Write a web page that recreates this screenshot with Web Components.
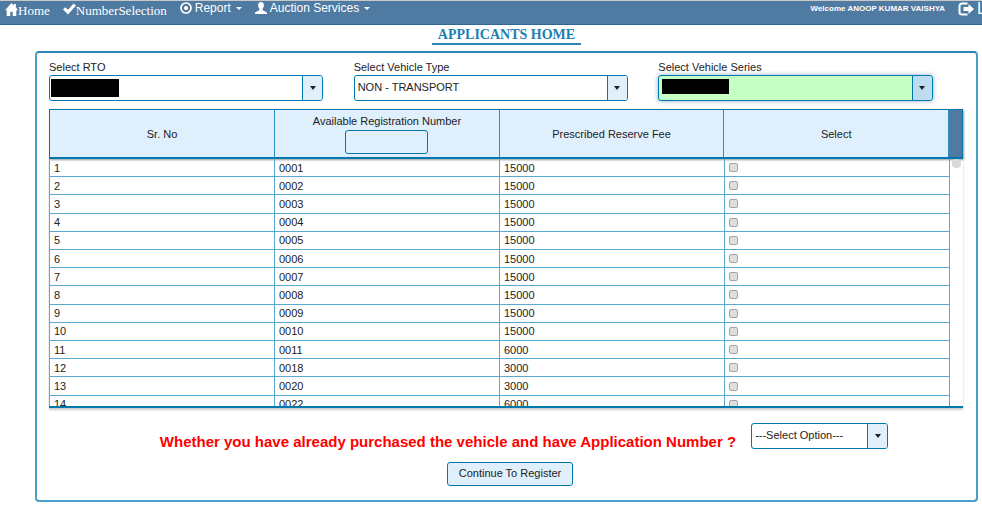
<!DOCTYPE html>
<html lang="en">
<head>
<meta charset="utf-8">
<title>Applicants Home</title>
<style>
    html {
        overflow: hidden;
    }
    body {
        margin: 0;
        background: #fff;
        color: #222;
        font-family: "Liberation Sans", Arial, sans-serif;
        font-size: 11px;
        --line: #0078ae;
        --line-soft: #5aa9d0;
        --fill: #dfeffc;
        --bar: #4f7aa1;
    }
    main {
        padding: 2px 4px 6px 35px;
    }
</style>
</head>
<body>
<nav-bar>
    <nav-link icon="home" serif>Home</nav-link>
    <nav-link icon="ok" serif>NumberSelection</nav-link>
    <nav-link icon="record" menu>Report</nav-link>
    <nav-link icon="user" menu>Auction Services</nav-link>
    <span slot="user">Welcome ANOOP KUMAR VAISHYA</span>
    <nav-link slot="end" icon="logout" large>Logout</nav-link>
</nav-bar>
<main>
    <page-title>APPLICANTS HOME</page-title>
    <content-panel>
        <field-row>
            <select-field label="Select RTO" mask="wide"></select-field>
            <select-field label="Select Vehicle Type" value="NON - TRANSPORT"></select-field>
            <select-field label="Select Vehicle Series" mask="narrow" active></select-field>
        </field-row>
        <number-table></number-table>
        <question-row>
            Whether you have already purchased the vehicle and have Application Number ?
            <select-field slot="answer" value="---Select Option---" name="Application Number"></select-field>
        </question-row>
        <action-button>Continue To Register</action-button>
    </content-panel>
</main>

<script>
const ICONS = {
    home: '<svg width="13" height="13" viewBox="0 0 13 13"><path fill="#fff" d="M6.500 0 8.900 2.300V1h2v3.200L13 7.300h-1.700V13H7.700V8.800H5.300V13H1.700V7.300H0z"/></svg>',
    ok: '<svg width="13" height="12" viewBox="0 0 13 12"><path fill="#fff" d="M0 6.600 2.200 4.200 5 6.800 10.600.4 13 2.600 5 11.600z"/></svg>',
    record: '<svg width="12" height="12" viewBox="0 0 12 12"><circle cx="6" cy="6" r="5" fill="none" stroke="#fff" stroke-width="1.700"/><circle cx="6" cy="6" r="2.100" fill="#fff"/></svg>',
    user: '<svg width="12" height="12" viewBox="0 0 12 12"><path fill="#fff" d="M6 0c2 0 2.900 1.400 2.900 3.300 0 1.500-.6 2.600-1.300 3.400v1.100c0 .5.4.8 1 1l2.200.9c.8.3 1.200.8 1.200 1.600v.7H0v-.7c0-.8.4-1.300 1.200-1.600l2.200-.9c.6-.2 1-.5 1-1V6.700C3.700 5.900 3.100 4.800 3.100 3.300 3.100 1.400 4 0 6 0z"/></svg>',
    logout: '<svg width="16" height="14" viewBox="0 0 16 14"><path fill="none" stroke="#fff" stroke-width="2" d="M9.500 1.500H4A2.500 2.500 0 0 0 1.500 4v6A2.500 2.500 0 0 0 4 12.500h5.500"/><path fill="#fff" d="M5.500 5h5V2L16 7l-5.500 5V9h-5z"/></svg>'
};

class NavBar extends HTMLElement {
    constructor() {
        super();
        this.attachShadow({ mode: 'open' });
        this.shadowRoot.innerHTML = `
        <style>
            :host {
                display: block;
                overflow: hidden;
                background: var(--bar);
                border-top: 1px solid #c9c9c9;
                border-bottom: 1px solid #2f6796;
                color: #fff;
            }
            nav {
                display: flex;
                align-items: flex-start;
                gap: 13px;
                height: 23px;
                padding-left: 5px;
                margin-right: -44px;
                white-space: nowrap;
            }
            .user {
                margin-left: auto;
                font-size: 8px;
                font-weight: bold;
                line-height: 16px;
            }
        </style>
        <nav>
            <slot></slot>
            <div class="user"><slot name="user"></slot></div>
            <slot name="end"></slot>
        </nav>
        `;
    }
}

class NavLink extends HTMLElement {
    constructor() {
        super();
        this.attachShadow({ mode: 'open' });
        this.shadowRoot.innerHTML = `
        <style>
            :host {
                display: block;
            }
            a {
                display: flex;
                align-items: center;
                gap: 3px;
                color: inherit;
                text-decoration: none;
                font-size: 12px;
                line-height: 14px;
            }
            :host([serif]) a {
                gap: 0;
                font-family: "Liberation Serif", "Times New Roman", serif;
                font-size: 13px;
                line-height: 20px;
            }
            :host([serif]) svg {
                margin-bottom: 4px;
            }
            :host([large]) a {
                font-size: 16px;
                line-height: 16px;
            }
            svg {
                display: block;
            }
            .caret {
                margin-left: 2px;
                border: 3px solid transparent;
                border-top-color: #fff;
                border-bottom: 0;
            }
        </style>
        <a href="#">
            ${ICONS[this.getAttribute('icon')]}
            <span><slot></slot></span>
            ${this.hasAttribute('menu') ? '<i class="caret"></i>' : ''}
        </a>
        `;
    }
}

class PageTitle extends HTMLElement {
    constructor() {
        super();
        this.attachShadow({ mode: 'open' });
        this.shadowRoot.innerHTML = `
        <style>
            :host {
                display: flex;
                justify-content: center;
                margin-bottom: 6px;
            }
            h1 {
                margin: 0;
                padding: 0 6px;
                border-bottom: 2px solid #2a86b8;
                color: #1c7fb2;
                font: bold 14px/16px "Liberation Serif", "Times New Roman", serif;
            }
        </style>
        <h1><slot></slot></h1>
        `;
    }
}

class ContentPanel extends HTMLElement {
    constructor() {
        super();
        this.attachShadow({ mode: 'open' });
        this.shadowRoot.innerHTML = `
        <style>
            :host {
                display: block;
                padding: 7px 13px 14px 12px;
                border: 2px solid #4a9fcb;
                border-top-color: #2a86b8;
                border-radius: 4px;
            }
        </style>
        <slot></slot>
        `;
    }
}

class FieldRow extends HTMLElement {
    constructor() {
        super();
        this.attachShadow({ mode: 'open' });
        this.shadowRoot.innerHTML = `
        <style>
            :host {
                display: grid;
                grid-template-columns: repeat(3, 1fr);
            }
            ::slotted(*) {
                width: 90%;
            }
        </style>
        <slot></slot>
        `;
    }
}

class SelectField extends HTMLElement {
    constructor() {
        super();
        this.attachShadow({ mode: 'open' });

        let label = this.getAttribute('label');
        let value = this.getAttribute('value') || '';
        let name = this.getAttribute('name');

        this.shadowRoot.innerHTML = `
        <style>
            :host {
                display: block;
            }
            label {
                display: block;
                padding-bottom: 1px;
                line-height: 14px;
            }
            .box {
                display: grid;
                grid-template-columns: 1fr 20px;
                height: 26px;
                box-sizing: border-box;
                border: 1px solid var(--line);
                border-radius: 3px;
                overflow: hidden;
                background: #fff;
            }
            select {
                grid-area: 1 / 1 / 2 / 3;
                appearance: none;
                width: 100%;
                margin: 0;
                padding: 0 24px 2px 3px;
                border: 0;
                background: transparent;
                color: inherit;
                font: inherit;
                outline: none;
            }
            .arrow {
                grid-area: 1 / 2;
                display: flex;
                align-items: center;
                justify-content: center;
                border-left: 1px solid var(--line);
                background: var(--fill);
                pointer-events: none;
            }
            .arrow i {
                border: 3px solid transparent;
                border-top: 4px solid #222;
                border-bottom: 0;
            }
            .mask {
                grid-area: 1 / 1;
                width: 68px;
                height: 18px;
                margin: 3px 1px;
                background: #000;
                pointer-events: none;
            }
            .mask.narrow {
                width: 67px;
                height: 15px;
                margin: 3px;
            }
            :host([active]) .box {
                background: #c6ffc4;
                box-shadow: 0 0 5px #85b2cb;
            }
            :host([active]) .arrow {
                background: #bddcef;
            }
        </style>
        ${label ? `<label for="choice">${label}</label>` : ''}
        <div class="box">
            <select id="choice" ${name ? `aria-label="${name}"` : ''}>
                <option>${value}</option>
            </select>
            ${this.hasAttribute('mask') ? `<span class="mask ${this.getAttribute('mask')}"></span>` : ''}
            <span class="arrow"><i></i></span>
        </div>
        `;
    }
}

class NumberTable extends HTMLElement {
    constructor() {
        super();
        this.attachShadow({ mode: 'open' });

        let rows = [
            ['0001', 15000], ['0002', 15000], ['0003', 15000], ['0004', 15000],
            ['0005', 15000], ['0006', 15000], ['0007', 15000], ['0008', 15000],
            ['0009', 15000], ['0010', 15000], ['0011', 6000], ['0018', 3000],
            ['0020', 3000], ['0022', 6000]
        ];

        this.shadowRoot.innerHTML = `
        <style>
            :host {
                display: block;
                margin-top: 8px;
            }
            table {
                width: 100%;
                border-collapse: collapse;
                table-layout: fixed;
            }
            .head {
                display: grid;
                grid-template-columns: 1fr 13px;
                border: 1px solid var(--line);
                border-bottom-width: 2px;
                background: var(--bar);
                box-shadow: 1px 1px 2px #999;
            }
            th {
                height: 47px;
                padding: 0;
                background: var(--fill);
                border-right: 1px solid #2a8fc2;
                font-weight: normal;
            }
            th label {
                display: block;
                line-height: 14px;
            }
            th input {
                display: block;
                box-sizing: border-box;
                width: 83px;
                height: 24px;
                margin: 2px auto 0;
                border: 1px solid var(--line);
                border-radius: 3px;
                background: transparent;
                font: inherit;
            }
            .body {
                display: grid;
                grid-template-columns: 1fr 13px;
                height: 247px;
                overflow: hidden;
                border-bottom: 2px solid var(--line);
                box-shadow: 0 2px 2px #ccc;
            }
            .body table {
                height: 255px;
            }
            td {
                padding: 0 4px;
                border: 1px solid var(--line-soft);
                border-top: 0;
                line-height: 16px;
            }
            td input {
                appearance: none;
                display: block;
                box-sizing: border-box;
                width: 9px;
                height: 9px;
                margin: 0;
                border: 1px solid #a5a5a5;
                border-radius: 2px;
                background: #dedede;
            }
            .thumb {
                width: 9px;
                height: 9px;
                margin: 0 2px;
                border-radius: 4px;
                background: #d9d9d9;
            }
        </style>
        <div class="head">
            <table>
                <thead>
                    <tr>
                        <th>Sr. No</th>
                        <th><label for="filter">Available Registration Number</label><input id="filter" type="text"></th>
                        <th>Prescribed Reserve Fee</th>
                        <th>Select</th>
                    </tr>
                </thead>
            </table>
        </div>
        <div class="body">
            <table>
                <tbody>
                    ${rows.map((row, i) => `
                    <tr>
                        <td>${i + 1}</td>
                        <td>${row[0]}</td>
                        <td>${row[1]}</td>
                        <td><input type="checkbox" aria-label="Select ${row[0]}"></td>
                    </tr>`).join('')}
                </tbody>
            </table>
            <div class="thumb"></div>
        </div>
        `;
    }
}

class QuestionRow extends HTMLElement {
    constructor() {
        super();
        this.attachShadow({ mode: 'open' });
        this.shadowRoot.innerHTML = `
        <style>
            :host {
                display: flex;
                justify-content: center;
                gap: 15px;
                padding-left: 36px;
                margin-top: 15px;
            }
            p {
                margin: 0;
                padding-top: 10px;
                color: #f00;
                font-size: 15px;
                font-weight: bold;
                line-height: 18px;
            }
            ::slotted(select-field) {
                width: 137px;
            }
        </style>
        <p><slot></slot></p>
        <slot name="answer"></slot>
        `;
    }
}

class ActionButton extends HTMLElement {
    constructor() {
        super();
        this.attachShadow({ mode: 'open' });
        this.shadowRoot.innerHTML = `
        <style>
            :host {
                display: flex;
                justify-content: center;
                padding-left: 8px;
                margin-top: 11px;
            }
            button {
                height: 24px;
                padding: 0 11px 2px;
                border: 1px solid var(--line);
                border-radius: 3px;
                background: var(--fill);
                color: inherit;
                font: inherit;
            }
        </style>
        <button type="button"><slot></slot></button>
        `;
    }
}

customElements.define("nav-bar", NavBar);
customElements.define("nav-link", NavLink);
customElements.define("page-title", PageTitle);
customElements.define("content-panel", ContentPanel);
customElements.define("field-row", FieldRow);
customElements.define("select-field", SelectField);
customElements.define("number-table", NumberTable);
customElements.define("question-row", QuestionRow);
customElements.define("action-button", ActionButton);
</script>
</body>
</html>
